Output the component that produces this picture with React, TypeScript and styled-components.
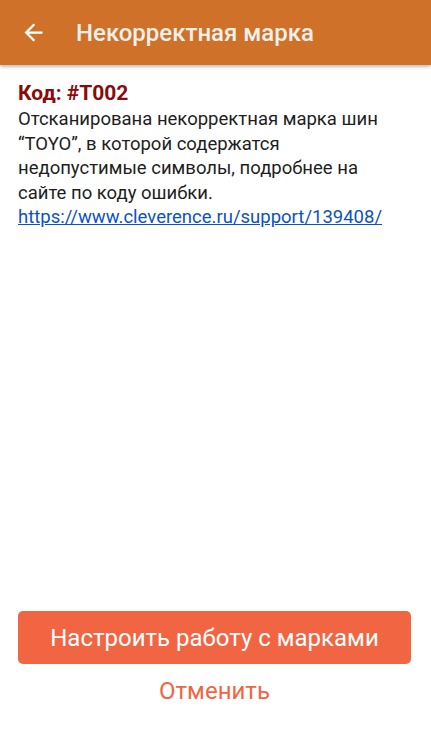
import React from "react";
import styled, { createGlobalStyle } from "styled-components";

const Global = createGlobalStyle`
  html, body { margin: 0; padding: 0; background: #ffffff; }
  body { font-family: Roboto, "Noto Sans", sans-serif; }
  #root { height: 738px; }
`;

const Screen = styled.div`
  width: 431px;
  height: 738px;
  display: flex;
  flex-direction: column;
  background: #ffffff;
`;

const Header = styled.header`
  height: 65px;
  flex: 0 0 65px;
  background: #cf7129;
  display: flex;
  align-items: center;
  padding-left: 20px;
  box-shadow: 0 2px 3px rgba(0, 0, 0, 0.25);
  position: relative;
  z-index: 1;
`;

const BackButton = styled.button`
  width: 27px;
  height: 27px;
  padding: 0;
  border: 0;
  background: none;
  display: flex;
  align-items: center;
  justify-content: center;
  margin-right: 29px;
`;

const Title = styled.h1`
  margin: 0;
  font-family: Roboto, sans-serif;
  font-weight: 500;
  font-size: 24px;
  color: #f3f0ec;
`;

const Content = styled.main`
  flex: 1;
  padding: 14px 40px 0 18px;
`;

const Code = styled.div`
  font-family: Roboto, sans-serif;
  font-weight: 700;
  font-size: 21px;
  line-height: 28px;
  color: #8b0a0a;
`;

const Message = styled.p`
  margin: 0;
  font-family: Roboto, sans-serif;
  font-size: 18.5px;
  line-height: 24.5px;
  color: #1e1e1e;
`;

const Link = styled.a`
  color: #0c52c4;
  text-decoration: underline;
`;

const Footer = styled.footer`
  display: flex;
  flex-direction: column;
  align-items: stretch;
  padding: 0 20px 31px 18px;
`;

const PrimaryButton = styled.button`
  height: 53px;
  border: 0;
  border-radius: 5px;
  background: #f26542;
  color: #ffffff;
  font-family: Roboto, sans-serif;
  font-size: 24px;
  font-weight: 400;
`;

const TextButton = styled.button`
  margin-top: 11px;
  height: 32px;
  border: 0;
  background: none;
  color: #f26542;
  font-family: Roboto, sans-serif;
  font-size: 24px;
`;

export default function App() {
  return (
    <>
      <Global />
      <Screen>
        <Header>
          <BackButton aria-label="Назад">
            <svg width="27" height="27" viewBox="0 0 24 24">
              <path
                d="M20 11H7.83l5.59-5.59L12 4l-8 8 8 8 1.41-1.41L7.83 13H20v-2z"
                fill="#ffffff"
              />
            </svg>
          </BackButton>
          <Title>Некорректная марка</Title>
        </Header>
        <Content>
          <Code>Код: #T002</Code>
          <Message>
            Отсканирована некорректная марка шин “TOYO”, в которой содержатся
            недопустимые символы, подробнее на сайте по коду ошибки.{" "}
            <Link href="#">https://www.cleverence.ru/support/139408/</Link>
          </Message>
        </Content>
        <Footer>
          <PrimaryButton>Настроить работу с марками</PrimaryButton>
          <TextButton>Отменить</TextButton>
        </Footer>
      </Screen>
    </>
  );
}
